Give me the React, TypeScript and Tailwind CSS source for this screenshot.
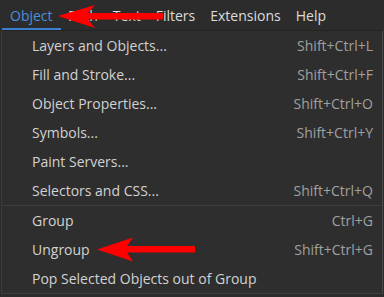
import React from 'react';

type Item = { label: string; shortcut?: string };

const topItems: Item[] = [
  { label: 'Layers and Objects...', shortcut: 'Shift+Ctrl+L' },
  { label: 'Fill and Stroke...', shortcut: 'Shift+Ctrl+F' },
  { label: 'Object Properties...', shortcut: 'Shift+Ctrl+O' },
  { label: 'Symbols...', shortcut: 'Shift+Ctrl+Y' },
  { label: 'Paint Servers...' },
  { label: 'Selectors and CSS...', shortcut: 'Shift+Ctrl+Q' },
];

const groupItems: Item[] = [
  { label: 'Group', shortcut: 'Ctrl+G' },
  { label: 'Ungroup', shortcut: 'Shift+Ctrl+G' },
  { label: 'Pop Selected Objects out of Group' },
];

const menuBar = ['Path', 'Text', 'Filters', 'Extensions', 'Help'];

const MenuRow: React.FC<{ item: Item }> = ({ item }) => (
  <div className="flex h-[29px] items-center justify-between pl-[30px] pr-[9px]">
    <span className="text-[#d2d2d2]">{item.label}</span>
    {item.shortcut && <span className="text-[#a0a0a0]">{item.shortcut}</span>}
  </div>
);

const App: React.FC = () => {
  return (
    <div
      className="relative h-[297px] w-[384px] overflow-hidden bg-[#2c2c2c] text-[14px]"
      style={{ fontFamily: '"Open Sans", "Noto Sans", sans-serif' }}
    >
      {/* menu bar */}
      <div className="flex h-[30px] items-stretch pl-[2px]">
        <div className="flex items-center border-b-2 border-[#3b7fd0] px-2 pt-[3px] text-[#4a8fdc]">Object</div>
        {menuBar.map((m) => (
          <div key={m} className="flex items-center px-[7.5px] pt-[1px] text-[#dcdcdc]">
            {m}
          </div>
        ))}
      </div>

      {/* dropdown */}
      <div className="ml-[1px] mr-[1px] border-t border-l border-r border-b border-t-[#232323] border-l-[#3a3a3a] border-r-[#4a4a4a] border-b-[#3e3e3e] bg-[#2e2e2e]">
        {topItems.map((it) => (
          <MenuRow key={it.label} item={it} />
        ))}
        <div className="h-px bg-[#3d3d3d]" />
        {groupItems.map((it) => (
          <MenuRow key={it.label} item={it} />
        ))}
      </div>

      {/* red annotation arrows */}
      <svg className="pointer-events-none absolute left-0 top-0" width="384" height="297">
        <polygon
          points="58,16 95,5 88,13 163,13 163,19.5 88,19.5 95,28"
          fill="#ff0000"
        />
        <polygon
          points="97,249.5 133,237.5 127,246 195,246 195,252.5 127,252.5 133,261.5"
          fill="#ff0000"
        />
      </svg>
    </div>
  );
};

export default App;
